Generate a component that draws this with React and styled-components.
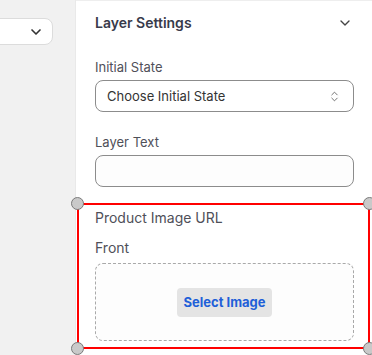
import React from "react";
import styled, { createGlobalStyle } from "styled-components";
import { ChevronDown, ChevronsUpDown } from "lucide-react";

const Global = createGlobalStyle`
  html, body { margin: 0; padding: 0; }
  body { font-family: Inter, "Noto Sans", sans-serif; background: #fff; }
  * { box-sizing: border-box; }
`;

const Page = styled.div`
  display: flex;
  width: 372px;
  height: 355px;
  overflow: hidden;
`;

const LeftPane = styled.div`
  width: 76px;
  flex-shrink: 0;
  background: #f1f1f1;
  border-right: 1px solid #e9e9e9;
  display: flex;
  justify-content: flex-end;
  align-items: flex-start;
  padding: 18px 22px 0 0;
  overflow: hidden;
`;

const MiniSelect = styled.div`
  flex-shrink: 0;
  width: 120px;
  height: 27px;
  background: #fff;
  border: 1px solid #dcdcdc;
  border-radius: 8px;
  display: flex;
  align-items: center;
  justify-content: flex-end;
  padding-right: 8px;
  color: #333;
`;

const Panel = styled.div`
  flex: 1;
  background: #fff;
  border-top: 1px solid #eeeeee;
  padding: 0 18px 0 19px;
  display: flex;
  flex-direction: column;
`;

const Header = styled.div`
  height: 43px;
  display: flex;
  align-items: center;
  justify-content: space-between;
  padding-right: 1px;
  color: #383a4a;
  font-size: 14px;
  font-weight: 600;
`;

const Label = styled.div`
  font-size: 13px;
  line-height: 16px;
  color: #4f5059;
  margin-top: ${(p) => p.$top || 0}px;
  margin-bottom: 5px;
`;

const SelectBox = styled.div`
  height: 32px;
  border: 1px solid #8c8c8c;
  border-radius: 8px;
  background: #fff;
  display: flex;
  align-items: center;
  justify-content: space-between;
  padding: 0 12px 0 11px;
  font-size: 13px;
  color: #333;
`;

const TextInput = styled.div`
  height: 32px;
  border: 1px solid #8c8c8c;
  border-radius: 8px;
  background: #fdfdfd;
`;

const Selected = styled.div`
  position: relative;
  margin: 16px -16px 0 -18px;
  border: 2px solid #ff0000;
  padding: 4px 14px 6px 16px;
  display: flex;
  flex-direction: column;
`;

const Handle = styled.span`
  position: absolute;
  width: 13px;
  height: 13px;
  border-radius: 50%;
  background: #c9c9c9;
  border: 1.5px solid #7a7a7a;
  ${(p) => (p.$v === "top" ? "top: -8px;" : "bottom: -8px;")}
  ${(p) => (p.$h === "left" ? "left: -8px;" : "right: -8px;")}
`;

const FieldTitle = styled.div`
  font-size: 14px;
  line-height: 18px;
  color: #4f5059;
  margin-top: ${(p) => p.$top || 0}px;
`;

const DropZone = styled.div`
  margin-top: 6px;
  height: 78px;
  border: 1px dashed #a9a9a9;
  border-radius: 8px;
  background: #fdfdfd;
  display: flex;
  align-items: center;
  justify-content: center;
`;

const SelectButton = styled.button`
  border: none;
  background: #e4e4e4;
  border-radius: 4px;
  height: 29px;
  padding: 0 6px;
  font-family: inherit;
  font-size: 13px;
  font-weight: 700;
  color: #1f5fd8;
  cursor: pointer;
`;

export default function App() {
  return (
    <>
      <Global />
      <Page>
        <LeftPane>
          <MiniSelect>
            <ChevronDown size={16} strokeWidth={2.5} />
          </MiniSelect>
        </LeftPane>
        <Panel>
          <Header>
            <span>Layer Settings</span>
            <ChevronDown size={16} strokeWidth={2} color="#444" />
          </Header>
          <Label $top={15}>Initial State</Label>
          <SelectBox>
            <span>Choose Initial State</span>
            <ChevronsUpDown size={13} strokeWidth={1.5} color="#555" />
          </SelectBox>
          <Label $top={22}>Layer Text</Label>
          <TextInput />
          <Selected>
            <Handle $v="top" $h="left" />
            <Handle $v="top" $h="right" />
            <Handle $v="bottom" $h="left" />
            <Handle $v="bottom" $h="right" />
            <FieldTitle>Product Image URL</FieldTitle>
            <FieldTitle $top={12}>Front</FieldTitle>
            <DropZone>
              <SelectButton>Select Image</SelectButton>
            </DropZone>
          </Selected>
        </Panel>
      </Page>
    </>
  );
}
